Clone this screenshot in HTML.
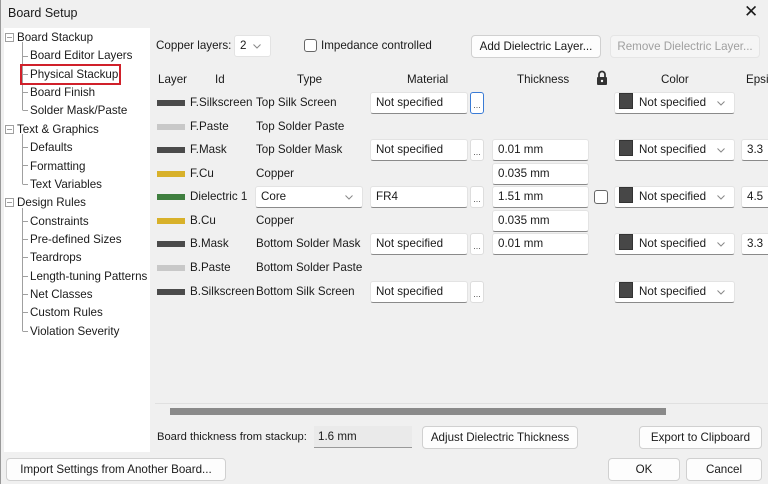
<!DOCTYPE html>
<html><head><style>
*{margin:0;padding:0;box-sizing:border-box}
body{width:768px;height:484px;background:#f0f0f0;font-family:"Liberation Sans",sans-serif;font-size:11.6px;color:#1a1a1a;position:relative;overflow:hidden}
.a{position:absolute;white-space:nowrap}
.tree{left:4px;top:28px;width:146px;height:424px;background:#fff}
.box{position:absolute;background:#fff;border:1px solid #e3e3e3;border-bottom:1px solid #8a8a8a;border-radius:3px;padding-left:5px;line-height:20px;height:22px;white-space:nowrap}
.btn{position:absolute;background:#fdfdfd;border:1px solid #d0d0d0;border-radius:4px;text-align:center;line-height:21px;height:23px;white-space:nowrap}
.sw{position:absolute;width:28px;height:6px}
.chev{position:absolute;right:9px;top:8px;width:8px;height:5px}
.cs{display:inline-block;width:14px;height:16px;background:#474747;vertical-align:middle;margin:-3px 6px 0 -1px;border:1px solid #333}
.dots{position:absolute;width:14px;height:22px;background:#fff;border:1px solid #ddd;border-radius:3px;font-size:9px;text-align:center;line-height:24px;color:#555}
</style></head><body>
<svg width="0" height="0" style="position:absolute"><defs><symbol id="cv" viewBox="0 0 8 5"><path d="M0.5 0.5L4 4L7.5 0.5" stroke="#888" fill="none"/></symbol></defs></svg>
<div class="a" style="left:8px;top:6px;font-size:12.5px">Board Setup</div>
<div class="a" style="left:744px;top:2px;font-size:17px">✕</div>
<div class="a" style="left:0;top:0;width:1px;height:484px;background:#999"></div>
<div class="a tree"></div>
<svg class="a" style="left:0;top:28px" width="150" height="320">
<g stroke="#a0a0a0" fill="none">
<rect x="5.5" y="5.5" width="8" height="8"/><line x1="7" y1="9.5" x2="12" y2="9.5"/>
<rect x="5.5" y="97.5" width="8" height="8"/><line x1="7" y1="101.5" x2="12" y2="101.5"/>
<rect x="5.5" y="170.5" width="8" height="8"/><line x1="7" y1="174.5" x2="12" y2="174.5"/>
<line x1="22.5" y1="14" x2="22.5" y2="82"/>
<line x1="22.5" y1="28.5" x2="28" y2="28.5"/><line x1="22.5" y1="46.5" x2="28" y2="46.5"/><line x1="22.5" y1="64.5" x2="28" y2="64.5"/><line x1="22.5" y1="82.5" x2="28" y2="82.5"/>
<line x1="22.5" y1="106" x2="22.5" y2="156"/>
<line x1="22.5" y1="119.5" x2="28" y2="119.5"/><line x1="22.5" y1="137.5" x2="28" y2="137.5"/><line x1="22.5" y1="156.5" x2="28" y2="156.5"/>
<line x1="22.5" y1="180" x2="22.5" y2="303"/>
<line x1="22.5" y1="193.5" x2="28" y2="193.5"/><line x1="22.5" y1="211.5" x2="28" y2="211.5"/><line x1="22.5" y1="229.5" x2="28" y2="229.5"/><line x1="22.5" y1="248.5" x2="28" y2="248.5"/><line x1="22.5" y1="266.5" x2="28" y2="266.5"/><line x1="22.5" y1="284.5" x2="28" y2="284.5"/><line x1="22.5" y1="303.5" x2="28" y2="303.5"/>
</g></svg>
<div class="a" style="left:17px;top:31px">Board Stackup</div>
<div class="a" style="left:30px;top:49px">Board Editor Layers</div>
<div class="a" style="left:20px;top:64px;width:101px;height:21px;border:2px solid #d0202a"></div>
<div class="a" style="left:30px;top:68px">Physical Stackup</div>
<div class="a" style="left:30px;top:86px">Board Finish</div>
<div class="a" style="left:30px;top:104px">Solder Mask/Paste</div>
<div class="a" style="left:17px;top:123px">Text &amp; Graphics</div>
<div class="a" style="left:30px;top:141px">Defaults</div>
<div class="a" style="left:30px;top:160px">Formatting</div>
<div class="a" style="left:30px;top:178px">Text Variables</div>
<div class="a" style="left:17px;top:196px">Design Rules</div>
<div class="a" style="left:30px;top:215px">Constraints</div>
<div class="a" style="left:30px;top:233px">Pre-defined Sizes</div>
<div class="a" style="left:30px;top:251px">Teardrops</div>
<div class="a" style="left:30px;top:270px">Length-tuning Patterns</div>
<div class="a" style="left:30px;top:288px">Net Classes</div>
<div class="a" style="left:30px;top:306px">Custom Rules</div>
<div class="a" style="left:30px;top:325px">Violation Severity</div>

<div class="a" style="left:156px;top:39px">Copper layers:</div>
<div class="box" style="left:234px;top:35px;width:37px;border-color:#e3e3e3">2<svg class="chev"><use href="#cv"/></svg></div>
<div class="a" style="left:304px;top:39px;width:13px;height:13px;border:1px solid #666;border-radius:3px;background:#fff"></div>
<div class="a" style="left:321px;top:39px">Impedance controlled</div>
<div class="btn" style="left:471px;top:35px;width:130px">Add Dielectric Layer...</div>
<div class="btn" style="left:610px;top:35px;width:150px;color:#a0a0a0;background:#f5f5f5;border-color:#e5e5e5">Remove Dielectric Layer...</div>

<div class="a" style="left:158px;top:73px">Layer</div>
<div class="a" style="left:215px;top:73px">Id</div>
<div class="a" style="left:297px;top:73px">Type</div>
<div class="a" style="left:407px;top:73px">Material</div>
<div class="a" style="left:517px;top:73px">Thickness</div>
<svg class="a" style="left:596px;top:70px" width="12" height="16"><path d="M3 7V4.5a3 3 0 0 1 6 0V7" stroke="#333" stroke-width="1.8" fill="none"/><rect x="1" y="7" width="10" height="8" rx="1" fill="#333"/><circle cx="6" cy="11" r="1.2" fill="#fff"/></svg>
<div class="a" style="left:661px;top:73px">Color</div>
<div class="a" style="left:746px;top:73px">Epsi</div>

<div class="sw" style="left:157px;top:100px;background:#4b4b4b"></div><div class="a" style="left:190px;top:96px">F.Silkscreen</div><div class="a" style="left:256px;top:96px">Top Silk Screen</div>
<div class="box" style="left:370px;top:92px;width:98px">Not specified</div><div class="dots" style="left:470px;top:92px;border-color:#3a7bd5">...</div>
<div class="box" style="left:614px;top:92px;width:121px"><span class="cs"></span>Not specified<svg class="chev"><use href="#cv"/></svg></div>

<div class="sw" style="left:157px;top:124px;background:#c8c8c8"></div><div class="a" style="left:190px;top:120px">F.Paste</div><div class="a" style="left:256px;top:120px">Top Solder Paste</div>

<div class="sw" style="left:157px;top:147px;background:#4b4b4b"></div><div class="a" style="left:190px;top:143px">F.Mask</div><div class="a" style="left:256px;top:143px">Top Solder Mask</div>
<div class="box" style="left:370px;top:139px;width:98px">Not specified</div><div class="dots" style="left:470px;top:139px">...</div>
<div class="box" style="left:492px;top:139px;width:97px">0.01 mm</div>
<div class="box" style="left:614px;top:139px;width:121px"><span class="cs"></span>Not specified<svg class="chev"><use href="#cv"/></svg></div>
<div class="box" style="left:741px;top:139px;width:30px">3.3</div>

<div class="sw" style="left:157px;top:171px;background:#d8b12a"></div><div class="a" style="left:190px;top:167px">F.Cu</div><div class="a" style="left:256px;top:167px">Copper</div>
<div class="box" style="left:492px;top:163px;width:97px">0.035 mm</div>

<div class="sw" style="left:157px;top:194px;background:#3f7f3f"></div><div class="a" style="left:190px;top:190px">Dielectric 1</div>
<div class="box" style="left:255px;top:186px;width:108px">Core<svg class="chev"><use href="#cv"/></svg></div>
<div class="box" style="left:370px;top:186px;width:98px">FR4</div><div class="dots" style="left:470px;top:186px">...</div>
<div class="box" style="left:492px;top:186px;width:97px">1.51 mm</div>
<div class="a" style="left:594px;top:190px;width:14px;height:14px;border:1px solid #666;border-radius:3px;background:#fff"></div>
<div class="box" style="left:614px;top:186px;width:121px"><span class="cs"></span>Not specified<svg class="chev"><use href="#cv"/></svg></div>
<div class="box" style="left:741px;top:186px;width:30px">4.5</div>

<div class="sw" style="left:157px;top:218px;background:#d8b12a"></div><div class="a" style="left:190px;top:214px">B.Cu</div><div class="a" style="left:256px;top:214px">Copper</div>
<div class="box" style="left:492px;top:210px;width:97px">0.035 mm</div>

<div class="sw" style="left:157px;top:241px;background:#4b4b4b"></div><div class="a" style="left:190px;top:237px">B.Mask</div><div class="a" style="left:256px;top:237px">Bottom Solder Mask</div>
<div class="box" style="left:370px;top:233px;width:98px">Not specified</div><div class="dots" style="left:470px;top:233px">...</div>
<div class="box" style="left:492px;top:233px;width:97px">0.01 mm</div>
<div class="box" style="left:614px;top:233px;width:121px"><span class="cs"></span>Not specified<svg class="chev"><use href="#cv"/></svg></div>
<div class="box" style="left:741px;top:233px;width:30px">3.3</div>

<div class="sw" style="left:157px;top:265px;background:#c8c8c8"></div><div class="a" style="left:190px;top:261px">B.Paste</div><div class="a" style="left:256px;top:261px">Bottom Solder Paste</div>

<div class="sw" style="left:157px;top:289px;background:#4b4b4b"></div><div class="a" style="left:190px;top:285px">B.Silkscreen</div><div class="a" style="left:256px;top:285px">Bottom Silk Screen</div>
<div class="box" style="left:370px;top:281px;width:98px">Not specified</div><div class="dots" style="left:470px;top:281px">...</div>
<div class="box" style="left:614px;top:281px;width:121px"><span class="cs"></span>Not specified<svg class="chev"><use href="#cv"/></svg></div>

<div class="a" style="left:155px;top:403px;width:613px;height:1px;background:#e0e0e0"></div>
<div class="a" style="left:170px;top:408px;width:496px;height:7px;background:#8a8a8a"></div>

<div class="a" style="left:157px;top:431px;font-size:11.2px">Board thickness from stackup:</div>
<div class="a" style="left:314px;top:426px;width:98px;height:22px;background:#eaeaea;border-bottom:1px solid #999;padding-left:4px;line-height:22px">1.6 mm</div>
<div class="btn" style="left:422px;top:426px;width:156px">Adjust Dielectric Thickness</div>
<div class="btn" style="left:639px;top:426px;width:123px">Export to Clipboard</div>

<div class="btn" style="left:6px;top:458px;width:220px">Import Settings from Another Board...</div>
<div class="btn" style="left:608px;top:458px;width:72px">OK</div>
<div class="btn" style="left:686px;top:458px;width:76px">Cancel</div>
</body></html>
